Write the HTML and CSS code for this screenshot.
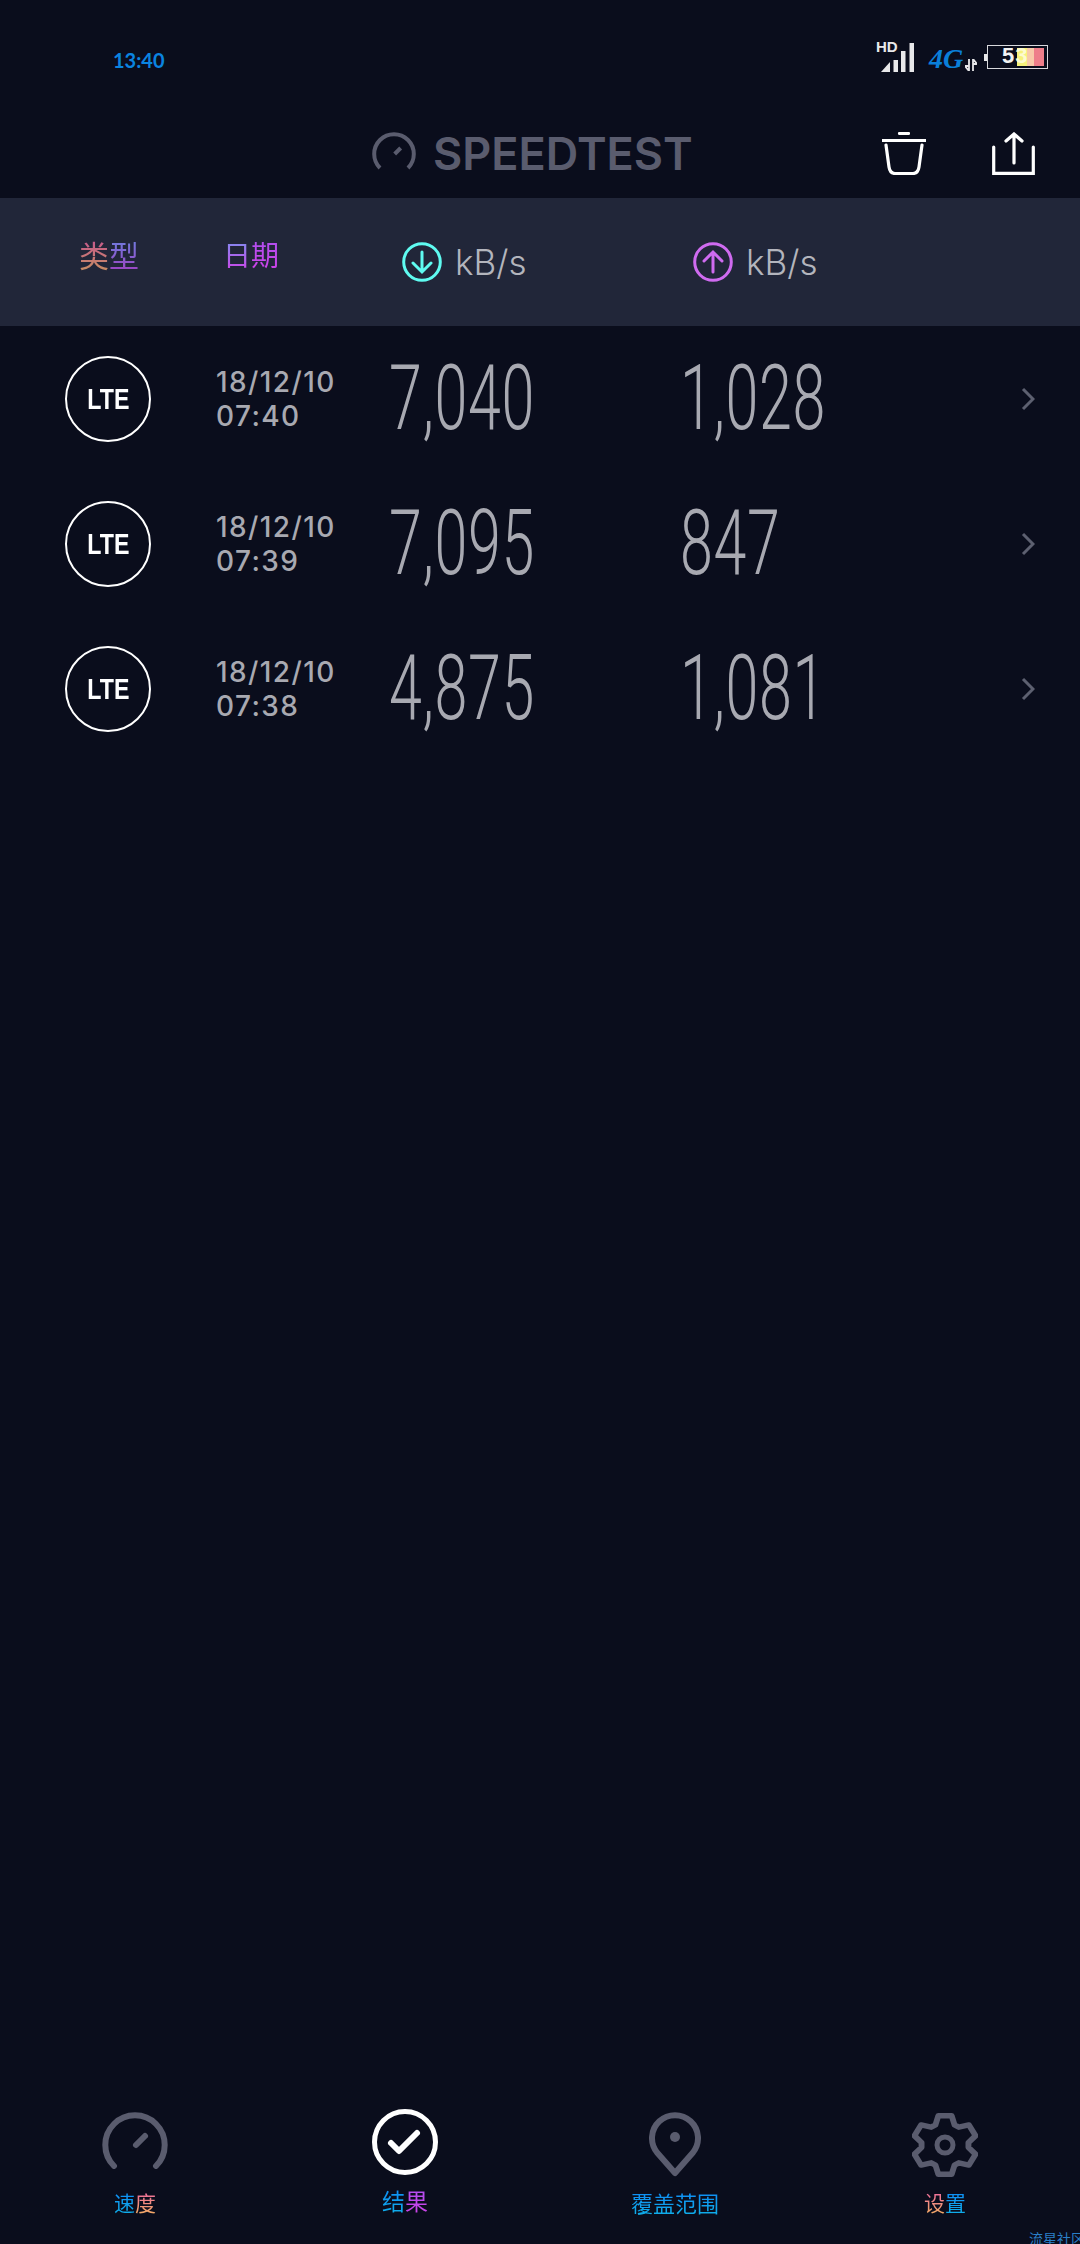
FILE: index.html
```html
<!DOCTYPE html>
<html lang="zh-CN">
<head>
    <meta charset="UTF-8">
    <meta name="viewport" content="width=device-width, initial-scale=1.0">
    <title>Speedtest</title>
    <link rel="stylesheet" href="styles.css">
</head>
<body>
    <div class="app">
        <div class="status-bar">
            <span class="clock">13:40</span>
            <div class="status-icons">
                <svg class="signal" width="38" height="35" viewBox="0 -4 38 35">
                    <text x="0" y="11" class="signal-hd">HD</text>
                    <polygon points="5,31 14,31 14,21" fill="#e8e8ea"/>
                    <rect x="17.5" y="19" width="4.5" height="12" fill="#e8e8ea"/>
                    <rect x="25" y="10" width="4.5" height="21" fill="#e8e8ea"/>
                    <rect x="33.5" y="2" width="4.5" height="29" fill="#e8e8ea"/>
                </svg>
                <span class="net">4G</span>
                <svg class="net-arrows" width="12" height="12" viewBox="0 0 12 12">
                    <path d="M4 0 V12 L0 7 H4 M8 12 V0 L12 5 H8" fill="none" stroke="#e8e8ea" stroke-width="1.8"/>
                </svg>
                <div class="battery-wrap">
                    <span class="battery-nub"></span>
                    <div class="battery">
                        <span class="seg seg-yellow"></span>
                        <span class="seg seg-peach"></span>
                        <span class="seg seg-pink"></span>
                        <span class="battery-num">5<span class="battery-num-tail">3</span></span>
                    </div>
                </div>
            </div>
        </div>

        <div class="toolbar">
            <div class="brand">
                <svg width="44" height="38" viewBox="0 0 66 57">
                    <path d="M12 54 A29.7 29.7 0 1 1 54 54" fill="none" stroke="#5a5c6e" stroke-width="6"/>
                    <path d="M34 33 L43 24" fill="none" stroke="#5a5c6e" stroke-width="6"/>
                </svg>
                <span class="brand-name">SPEEDTEST</span>
            </div>
            <div class="actions">
                <svg width="44" height="43" viewBox="0 0 44 43">
                    <path d="M17.5 1.5 H26.5 M0 8.5 H44 M4 13 L7 35 Q8 41.5 13 41.5 H31 Q36 41.5 37 35 L40 13" fill="none" stroke="#fff" stroke-width="3.2" stroke-linecap="round"/>
                </svg>
                <svg width="43" height="43" viewBox="0 0 43 43">
                    <path d="M1.7 15 V41.3 H41.3 V15 M22 31 V2 M14 9 L22 2 L30 9" fill="none" stroke="#fff" stroke-width="3.2" stroke-linecap="round"/>
                </svg>
            </div>
        </div>

        <div class="columns table-grid">
            <div class="col-type">
                <span class="ink ink-pink">类</span><span class="ink ink-violet">型</span>
            </div>
            <div class="col-date">
                <span class="ink ink-blue-magenta">日</span><span class="ink ink-magenta">期</span>
            </div>
            <div class="col-speed col-down">
                <svg width="40" height="40" viewBox="0 0 40 40">
                    <circle cx="20" cy="20" r="18.3" fill="none" stroke="#5ffbf1" stroke-width="3"/>
                    <path d="M20 10 V29 M11 21 L20 30 L29 21" fill="none" stroke="#5ffbf1" stroke-width="3" stroke-linecap="round"/>
                </svg>
                <span>kB/s</span>
            </div>
            <div class="col-speed col-up">
                <svg width="40" height="40" viewBox="0 0 40 40">
                    <circle cx="20" cy="20" r="18.3" fill="none" stroke="#cf6bf0" stroke-width="3"/>
                    <path d="M20 30 V11 M11 19 L20 10 L29 19" fill="none" stroke="#cf6bf0" stroke-width="3" stroke-linecap="round"/>
                </svg>
                <span>kB/s</span>
            </div>
        </div>

        <div class="results">
            <div class="result table-grid">
                <div class="badge"><span>LTE</span></div>
                <div class="when">18/12/10<br>07:40</div>
                <div class="speed speed-down"><span>7,040</span></div>
                <div class="speed"><span>1,028</span></div>
                <svg class="chevron" width="14" height="24" viewBox="0 0 14 24"><path d="M2 2 L12 12 L2 22" fill="none" stroke="#5d6070" stroke-width="3"/></svg>
            </div>
            <div class="result table-grid">
                <div class="badge"><span>LTE</span></div>
                <div class="when">18/12/10<br>07:39</div>
                <div class="speed speed-down"><span>7,095</span></div>
                <div class="speed"><span>847</span></div>
                <svg class="chevron" width="14" height="24" viewBox="0 0 14 24"><path d="M2 2 L12 12 L2 22" fill="none" stroke="#5d6070" stroke-width="3"/></svg>
            </div>
            <div class="result table-grid">
                <div class="badge"><span>LTE</span></div>
                <div class="when">18/12/10<br>07:38</div>
                <div class="speed speed-down"><span>4,875</span></div>
                <div class="speed"><span>1,081</span></div>
                <svg class="chevron" width="14" height="24" viewBox="0 0 14 24"><path d="M2 2 L12 12 L2 22" fill="none" stroke="#5d6070" stroke-width="3"/></svg>
            </div>
        </div>

        <div class="tabs">
            <div class="tab">
                <div class="tab-icon">
                    <svg width="66" height="57" viewBox="0 0 66 57">
                        <path d="M12 54 A29.7 29.7 0 1 1 54 54" fill="none" stroke="#5a5c6e" stroke-width="6" stroke-linecap="round"/>
                        <path d="M34 33 L43 24" fill="none" stroke="#5a5c6e" stroke-width="6" stroke-linecap="round"/>
                    </svg>
                </div>
                <div class="tab-label"><span class="ink ink-sky">速</span><span class="ink ink-peach">度</span></div>
            </div>
            <div class="tab tab-active">
                <div class="tab-icon">
                    <svg width="66" height="66" viewBox="0 0 66 66">
                        <circle cx="33" cy="33" r="30.5" fill="none" stroke="#fff" stroke-width="5"/>
                        <path d="M19 34 L27 42 L45 24" fill="none" stroke="#fff" stroke-width="6" stroke-linecap="round" stroke-linejoin="round"/>
                    </svg>
                </div>
                <div class="tab-label"><span class="ink ink-sky">结</span><span class="ink ink-magenta">果</span></div>
            </div>
            <div class="tab">
                <div class="tab-icon">
                    <svg width="52" height="66" viewBox="0 0 52 66">
                        <path d="M26 61 L8 40.5 A23 23 0 1 1 44 40.5 Z" fill="none" stroke="#5a5c6e" stroke-width="6" stroke-linejoin="round"/>
                        <circle cx="26" cy="25" r="5" fill="#5a5c6e"/>
                    </svg>
                </div>
                <div class="tab-label tab-label-wide"><span class="ink ink-sky">覆</span><span class="ink ink-sky">盖</span><span class="ink ink-sky">范</span><span class="ink ink-sky">围</span></div>
            </div>
            <div class="tab">
                <div class="tab-icon">
                    <svg width="66" height="66" viewBox="0 0 66 66">
                        <polygon transform="translate(33 33) scale(1.07 1) translate(-33 -33)" points="24.05,12.9 26.76,3.66 39.24,3.66 41.95,12.9 45.9,15.2 55.3,12.93 61.53,23.73 54.9,30.7 54.9,35.3 61.53,42.27 55.3,53.07 45.9,50.8 41.95,53.1 39.24,62.34 26.76,62.34 24.05,53.1 20.1,50.8 10.7,53.07 4.47,42.27 11.1,35.3 11.1,30.7 4.47,23.73 10.7,12.93 20.1,15.2" fill="none" stroke="#5a5c6e" stroke-width="5.5" stroke-linejoin="round"/>
                        <circle cx="33" cy="33" r="8" fill="none" stroke="#5a5c6e" stroke-width="5"/>
                    </svg>
                </div>
                <div class="tab-label"><span class="ink ink-peach">设</span><span class="ink ink-sky">置</span></div>
            </div>
        </div>

        <div class="watermark">流星社区</div>
    </div>
</body>
</html>
```
FILE: styles.css
```css
* {
    box-sizing: border-box;
}
body {
    margin: 0;
    background-color: #0a0d1c;
    font-family: Inter, "Noto Sans CJK SC", sans-serif;
}
.app {
    position: relative;
    width: 1080px;
    height: 2244px;
    overflow: hidden;
    display: flex;
    flex-direction: column;
}

/* status bar */
.status-bar {
    height: 88px;
    flex: none;
    display: flex;
    justify-content: space-between;
    padding: 41px 32px 0 113px;
}
.clock {
    margin-top: 6px;
    font-family: Lato, sans-serif;
    font-weight: 700;
    font-size: 20px;
    line-height: 26px;
    color: #0a84e0;
}
.status-icons {
    display: flex;
    align-items: flex-start;
}
.signal {
    margin-top: -4px;
}
.signal-hd {
    font-family: "Liberation Sans", sans-serif;
    font-weight: 700;
    font-size: 15px;
    fill: #e8e8ea;
}
.net {
    margin: 5px 0 0 15px;
    width: 36px;
    font-family: "Liberation Serif", serif;
    font-style: italic;
    font-weight: 700;
    font-size: 28px;
    line-height: 26px;
    color: #0a7fd8;
}
.net-arrows {
    margin-top: 18px;
}
.battery-wrap {
    margin: 4px 0 0 7px;
    display: flex;
    align-items: center;
}
.battery-nub {
    width: 3px;
    height: 7px;
    background-color: #e8e8ea;
}
.battery {
    position: relative;
    width: 61px;
    height: 24px;
    padding: 2px 3px 2px 29px;
    border: 1.5px solid #d8d8dc;
    display: flex;
}
.seg {
    height: 100%;
}
.seg-yellow {
    width: 11px;
    background-color: #f7f27a;
}
.seg-peach {
    width: 7px;
    background-color: #f8c9a9;
}
.seg-pink {
    width: 11px;
    background-color: #ee7e8a;
}
.battery-num {
    position: absolute;
    left: 14px;
    top: -3px;
    font-family: "Liberation Sans", sans-serif;
    font-weight: 700;
    font-size: 22px;
    line-height: 26px;
    color: #f2f2f2;
}
.battery-num-tail {
    margin-left: 1px;
    color: #fdfbd0;
}

/* toolbar */
.toolbar {
    height: 110px;
    flex: none;
    display: flex;
    justify-content: space-between;
    padding: 44px 45px 0 372px;
}
.brand {
    display: flex;
    align-items: flex-start;
    gap: 17px;
}
.brand-name {
    font-weight: 600;
    font-size: 45px;
    line-height: 44px;
    color: #5a5c6e;
}
.actions {
    display: flex;
    align-items: flex-start;
    gap: 66px;
}

/* columns shared by header band and rows */
.table-grid {
    display: grid;
    grid-template-columns: 151px 176px 288px 1fr 14px;
    padding: 0 45px 0 65px;
    align-items: center;
}
.columns {
    height: 128px;
    flex: none;
    background-color: #212639;
}
.col-type {
    width: 88px;
    text-align: center;
    font-size: 30px;
    line-height: 36px;
    margin-top: -12px;
    white-space: nowrap;
}
.col-date {
    padding-left: 7px;
    font-size: 28px;
    line-height: 34px;
    margin-top: -12px;
    white-space: nowrap;
}
.col-speed {
    display: flex;
    align-items: center;
    gap: 13px;
    font-weight: 300;
    font-size: 35px;
    color: #b3b5bd;
}
.col-down {
    padding-left: 10px;
}
.col-up {
    padding-left: 13px;
}
.ink {
    -webkit-background-clip: text;
    background-clip: text;
    color: transparent;
}
.ink-pink {
    background-image: linear-gradient(#c6568f, #c8935f);
}
.ink-violet {
    background-image: linear-gradient(#6d7fe0, #a03fc0);
}
.ink-blue-magenta {
    background-image: linear-gradient(#7f8ff0, #d040e8);
}
.ink-magenta {
    background-image: linear-gradient(#b050f0, #d040e8);
}
.ink-sky {
    background-image: linear-gradient(#0f8cf5, #0fb0e8);
}
.ink-peach {
    background-image: linear-gradient(#ef6aa0, #f2b060);
}

/* result rows */
.results {
    flex: 1;
    padding-top: 30px;
}
.result {
    height: 145px;
    padding-bottom: 59px;
}
.badge {
    width: 86px;
    height: 86px;
    border: 2.5px solid #fff;
    border-radius: 50%;
    display: flex;
    align-items: center;
    justify-content: center;
    font-family: "Liberation Sans", sans-serif;
    font-weight: 700;
    font-size: 29px;
    color: #fff;
}
.badge span {
    transform: scaleX(0.8);
}
.when {
    font-weight: 500;
    font-size: 28px;
    line-height: 34px;
    letter-spacing: 1.4px;
    color: #a8a9b1;
}
.speed {
    height: 86px;
    white-space: nowrap;
}
.speed-down {
    margin-left: -3px;
}
.speed span {
    display: inline-block;
    font-family: Roboto, sans-serif;
    font-weight: 300;
    font-size: 91px;
    line-height: 84px;
    letter-spacing: 1px;
    color: #a8a9b1;
    transform: scaleX(0.65);
    transform-origin: left center;
}
.chevron {
    justify-self: end;
}

/* bottom tabs */
.tabs {
    height: 135px;
    flex: none;
    display: grid;
    grid-template-columns: repeat(4, 270px);
}
.tab {
    display: flex;
    flex-direction: column;
    align-items: center;
}
.tab-icon {
    height: 80px;
    padding-top: 3px;
    display: flex;
    align-items: flex-start;
}
.tab-label {
    margin-top: 2px;
    font-size: 21px;
    line-height: 26px;
    white-space: nowrap;
}
.tab-active .tab-label {
    margin-top: 0;
    font-size: 23px;
}
.tab-active .tab-icon {
    padding-top: 0;
}
.tab-label-wide {
    font-size: 22px;
}

.watermark {
    position: absolute;
    left: 1029px;
    top: 2231px;
    font-size: 14px;
    line-height: 16px;
    white-space: nowrap;
    color: #2a7fc7;
}
```
